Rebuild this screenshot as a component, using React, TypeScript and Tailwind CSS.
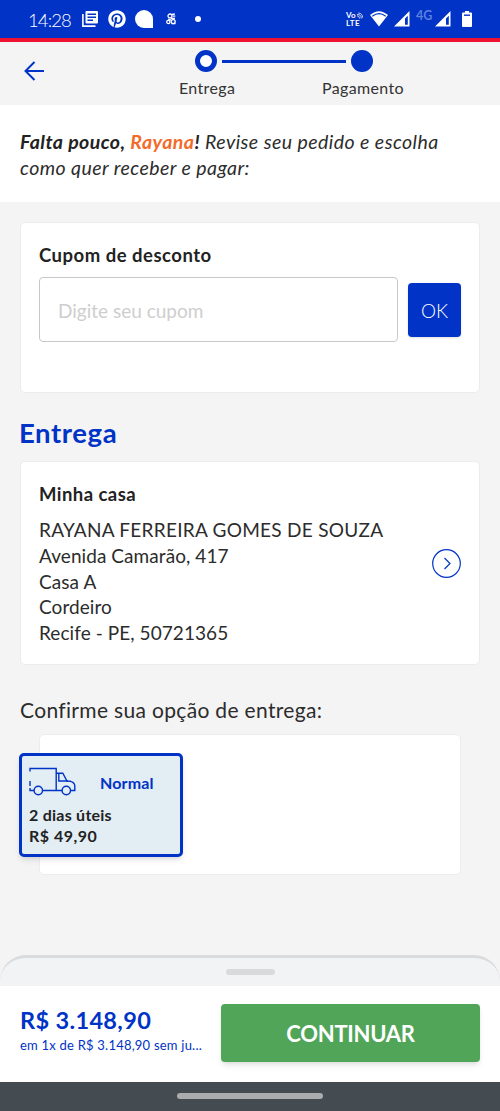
import { FaPinterest } from "react-icons/fa"

const addressLines = [
  "Avenida Camarão, 417",
  "Casa A",
  "Cordeiro",
  "Recife - PE, 50721365",
]

function NewsIcon() {
  return (
    <svg className="h-4 w-4" viewBox="0 0 16 16">
      <path d="M4.5 0H15Q16 0 16 1V11.5Q16 12.5 15 12.5H4.5Q3.5 12.5 3.5 11.5V1Q3.5 0 4.5 0Z" fill="#fff" />
      <path d="M5.5 3.3H14M5.5 6.3H14M5.5 9.3H11" stroke="#0033c6" strokeWidth="1.4" />
      <path d="M.9 3V15.1H13.5" fill="none" stroke="#fff" strokeWidth="1.6" />
    </svg>
  )
}

function SignalIcon() {
  return (
    <svg className="h-4 w-4" viewBox="0 0 16 16">
      <path d="M15.5 0V15.5H0Z" fill="#fff" />
      <path d="M11 7.5L13.8 4.7V13.8H11Z" fill="#0033c6" />
    </svg>
  )
}

function StatusBar() {
  return (
    <div className="flex h-[38px] items-center bg-[#0033c6] text-white">
      <span className="mt-[2px] ml-[28px] w-[54px] text-[18.5px] leading-none font-light tracking-[-0.9px]">14:28</span>
      <NewsIcon />
      <FaPinterest className="ml-[10px] h-[18px] w-[18px]" />
      <span className="ml-[9px] h-[18px] w-[18px] rounded-full rounded-br-[2px] bg-white" />
      <svg className="ml-[13px] h-3 w-[10px]" viewBox="0 0 10 12" fill="none" stroke="#fff" strokeWidth="1.3">
        <circle cx="4" cy="3" r="2" />
        <circle cx="2.3" cy="9" r="1.6" />
        <circle cx="7.2" cy="8.6" r="2" />
        <path d="M6 1.5L8.8 1M7 3.2H9.3M5 5.5H9M2 6L5 7.2M5.5 10.7H9.5" />
      </svg>
      <span className="ml-[19px] h-[6px] w-[6px] rounded-full bg-white" />
      <div className="ml-[145px] w-[17px] text-[8px] leading-[8px] font-bold">
        <div className="flex items-center">
          Vo
          <svg className="ml-px h-[7px] w-[6px] shrink-0" viewBox="0 0 7 7" fill="none" stroke="#fff">
            <path d="M0 3.8Q3 3.8 3 7M0 2.2Q5 2.2 5 7M1.5 .6Q6.5 1 6.5 6" strokeWidth=".9" />
          </svg>
        </div>
        <div className="tracking-[0.4px]">LTE</div>
      </div>
      <svg className="ml-[7px] h-4 w-[18px]" viewBox="0 0 18 16">
        <path d="M0 4Q9-3.6 18 4L9 15.5Z" fill="#fff" />
        <path d="M2.3 5.2Q9 .2 15.7 5.2" fill="none" stroke="#0033c6" strokeWidth="1.2" />
      </svg>
      <span className="ml-[6px]"><SignalIcon /></span>
      <span className="mb-[6px] ml-[6px] w-[17px] text-[12.5px] leading-none font-bold text-[#5e80df]">4G</span>
      <span className="ml-[2px]"><SignalIcon /></span>
      <svg className="ml-[11px] h-4 w-[10px]" viewBox="0 0 10 16">
        <path d="M3 0H7V1.5H9Q10 1.5 10 2.5V15Q10 16 9 16H1Q0 16 0 15V2.5Q0 1.5 1 1.5H3Z" fill="#fff" />
        <path d="M2 4.2H8" stroke="#0033c6" strokeWidth="1.4" />
      </svg>
    </div>
  )
}

function Header() {
  return (
    <header className="flex h-[63px] bg-[#f4f4f4]">
      <button className="mt-[19px] ml-[24px] h-5 w-5">
        <svg viewBox="0 0 20 20" fill="none" stroke="#0033c6" strokeWidth="2">
          <path d="M20 10H2M10.5 1L1.5 10L10.5 19" />
        </svg>
      </button>
      <div className="ml-[135px] w-[225px]">
        <div className="mt-[8px] ml-[16px] flex h-[22px] items-center gap-[5px]">
          <span className="h-[22px] w-[22px] shrink-0 rounded-full border-[5px] border-[#0033c6] bg-white" />
          <span className="h-[3px] w-[124px] bg-[#0033c6]" />
          <span className="h-[22px] w-[22px] shrink-0 rounded-full bg-[#0033c6]" />
        </div>
        <div className="mt-[5px] flex justify-between text-[16px] leading-[22px] tracking-[0.35px] text-[#333]">
          <span>Entrega</span>
          <span>Pagamento</span>
        </div>
      </div>
    </header>
  )
}

function CouponCard() {
  return (
    <section className="mx-[20px] h-[171px] rounded-[5px] border border-[#ececec] bg-white px-[18px] pt-[20px]">
      <h2 className="text-[18.5px] leading-[24px] font-bold tracking-[0.5px]">Cupom de desconto</h2>
      <div className="mt-[10px] flex items-center gap-[10px]">
        <input
          className="h-[65px] w-[359px] shrink-0 rounded-[4px] border border-[#c8c8c8] px-[18px] pt-[2px] text-[19px] placeholder:text-[#cecece]"
          placeholder="Digite seu cupom"
        />
        <button className="h-[54px] w-[53px] rounded-[4px] bg-[#0033c6] pt-[4px] text-[19px] font-light text-white shadow-sm">OK</button>
      </div>
    </section>
  )
}

function AddressCard() {
  return (
    <section className="mx-[20px] flex h-[204px] justify-between rounded-[5px] border border-[#ececec] bg-white px-[18px] pt-[20px]">
      <div>
        <h3 className="text-[18.5px] leading-[25px] font-bold tracking-[0.45px]">Minha casa</h3>
        <div className="mt-[10px] text-[19px] leading-[25.8px] tracking-[0.07px] text-[#2c2c2c]">
          <p className="tracking-[0.27px]">RAYANA FERREIRA GOMES DE SOUZA</p>
          {addressLines.map((line) => (
            <p key={line}>{line}</p>
          ))}
        </div>
      </div>
      <svg className="mt-[67px] h-[29px] w-[29px]" viewBox="0 0 29 29" fill="none" stroke="#0033c6" strokeWidth="1.2">
        <circle cx="14.5" cy="14.5" r="13.8" />
        <path d="M12.5 9L18 14.5L12.5 20" />
      </svg>
    </section>
  )
}

function TruckIcon() {
  return (
    <svg className="h-[29px] w-[47px]" viewBox="0 0 47 29" fill="none" stroke="#0033c6" strokeWidth="1.4">
      <path d="M1 4.5V1.5H27.2V23.5M1 14V19M1 21V23.5H5M13.5 23.5H33M41 23.5H45.8V18.5Q45.5 15.5 41.5 14.3L38 14L33.8 6.2H27.2" />
      <path d="M29.8 6.2V14H39" />
      <circle cx="9.3" cy="23.5" r="4.2" />
      <circle cx="37.3" cy="23.5" r="4.2" />
    </svg>
  )
}

function DeliveryOptions() {
  return (
    <section className="mx-[39px] h-[141px] rounded-[5px] border border-[#ececec] bg-white pt-[18px]">
      <div className="-ml-[21px] h-[104px] w-[164px] rounded-[5px] border-[3px] border-[#0033c6] bg-[#e2edf4] px-[7px] pt-[11px] shadow-md">
        <div className="flex h-[29px] items-center gap-[24px]">
          <TruckIcon />
          <span className="pt-[3px] text-[16px] leading-[22px] font-bold tracking-[0.15px] text-[#0033c6]">Normal</span>
        </div>
        <p className="mt-[8px] text-[16px] leading-[21px] font-bold tracking-[0.25px]">2 dias úteis</p>
        <p className="text-[16px] leading-[21px] font-bold tracking-[0.5px]">R$ 49,90</p>
      </div>
    </section>
  )
}

function CheckoutBar() {
  return (
    <footer className="mt-auto">
      <div className="flex h-[31px] justify-center rounded-t-[26px] border-t-[3px] border-[#dadbdc] bg-[#f2f3f5] pt-[11px]">
        <span className="h-[6px] w-[49px] rounded-full bg-[#d9dadb]" />
      </div>
      <div className="flex h-[96px] bg-white pl-[20px] text-[#0033c6]">
        <div className="w-[201px] pt-[18px]">
          <p className="text-[23.5px] leading-[32px] font-bold tracking-[0.35px]">R$ 3.148,90</p>
          <p className="text-[13px] leading-[18px] tracking-[0.22px]">em 1x de R$ 3.148,90 sem ju...</p>
        </div>
        <button className="mt-[18px] h-[58px] w-[259px] rounded-[4px] bg-[#51a559] text-[22px] font-bold tracking-[-0.3px] text-white shadow-md">CONTINUAR</button>
      </div>
      <div className="flex h-[29px] justify-center bg-[#444c51] pt-[11px]">
        <span className="h-[6px] w-[146px] rounded-full bg-[#aaacae]" />
      </div>
    </footer>
  )
}

export default function App() {
  return (
    <div className="flex h-[1111px] w-[500px] flex-col overflow-hidden bg-[#f4f4f4] font-['Lato',sans-serif] text-[#222]">
      <StatusBar />
      <div className="h-[4px] bg-[#ec1230]" />
      <Header />
      <div className="h-[97px] bg-white px-[20px] pt-[24px] text-[19.5px] leading-[26px] tracking-[0.45px] text-[#2c2c2c] italic">
        <p>
          <b className="text-[#222]">Falta pouco, <span className="text-[#f26b2b]">Rayana</span>!</b> Revise seu pedido e escolha
        </p>
        <p>como quer receber e pagar:</p>
      </div>
      <main className="pt-[20px]">
        <CouponCard />
        <h1 className="mt-[22px] ml-[19px] h-[46px] text-[27.5px] leading-[36px] font-bold tracking-[0.6px] text-[#0033c6]">Entrega</h1>
        <AddressCard />
        <p className="mt-[29px] ml-[20px] h-[40px] text-[21px] leading-[32px] tracking-[0.33px] text-[#2c2c2c]">Confirme sua opção de entrega:</p>
        <DeliveryOptions />
      </main>
      <CheckoutBar />
    </div>
  )
}
